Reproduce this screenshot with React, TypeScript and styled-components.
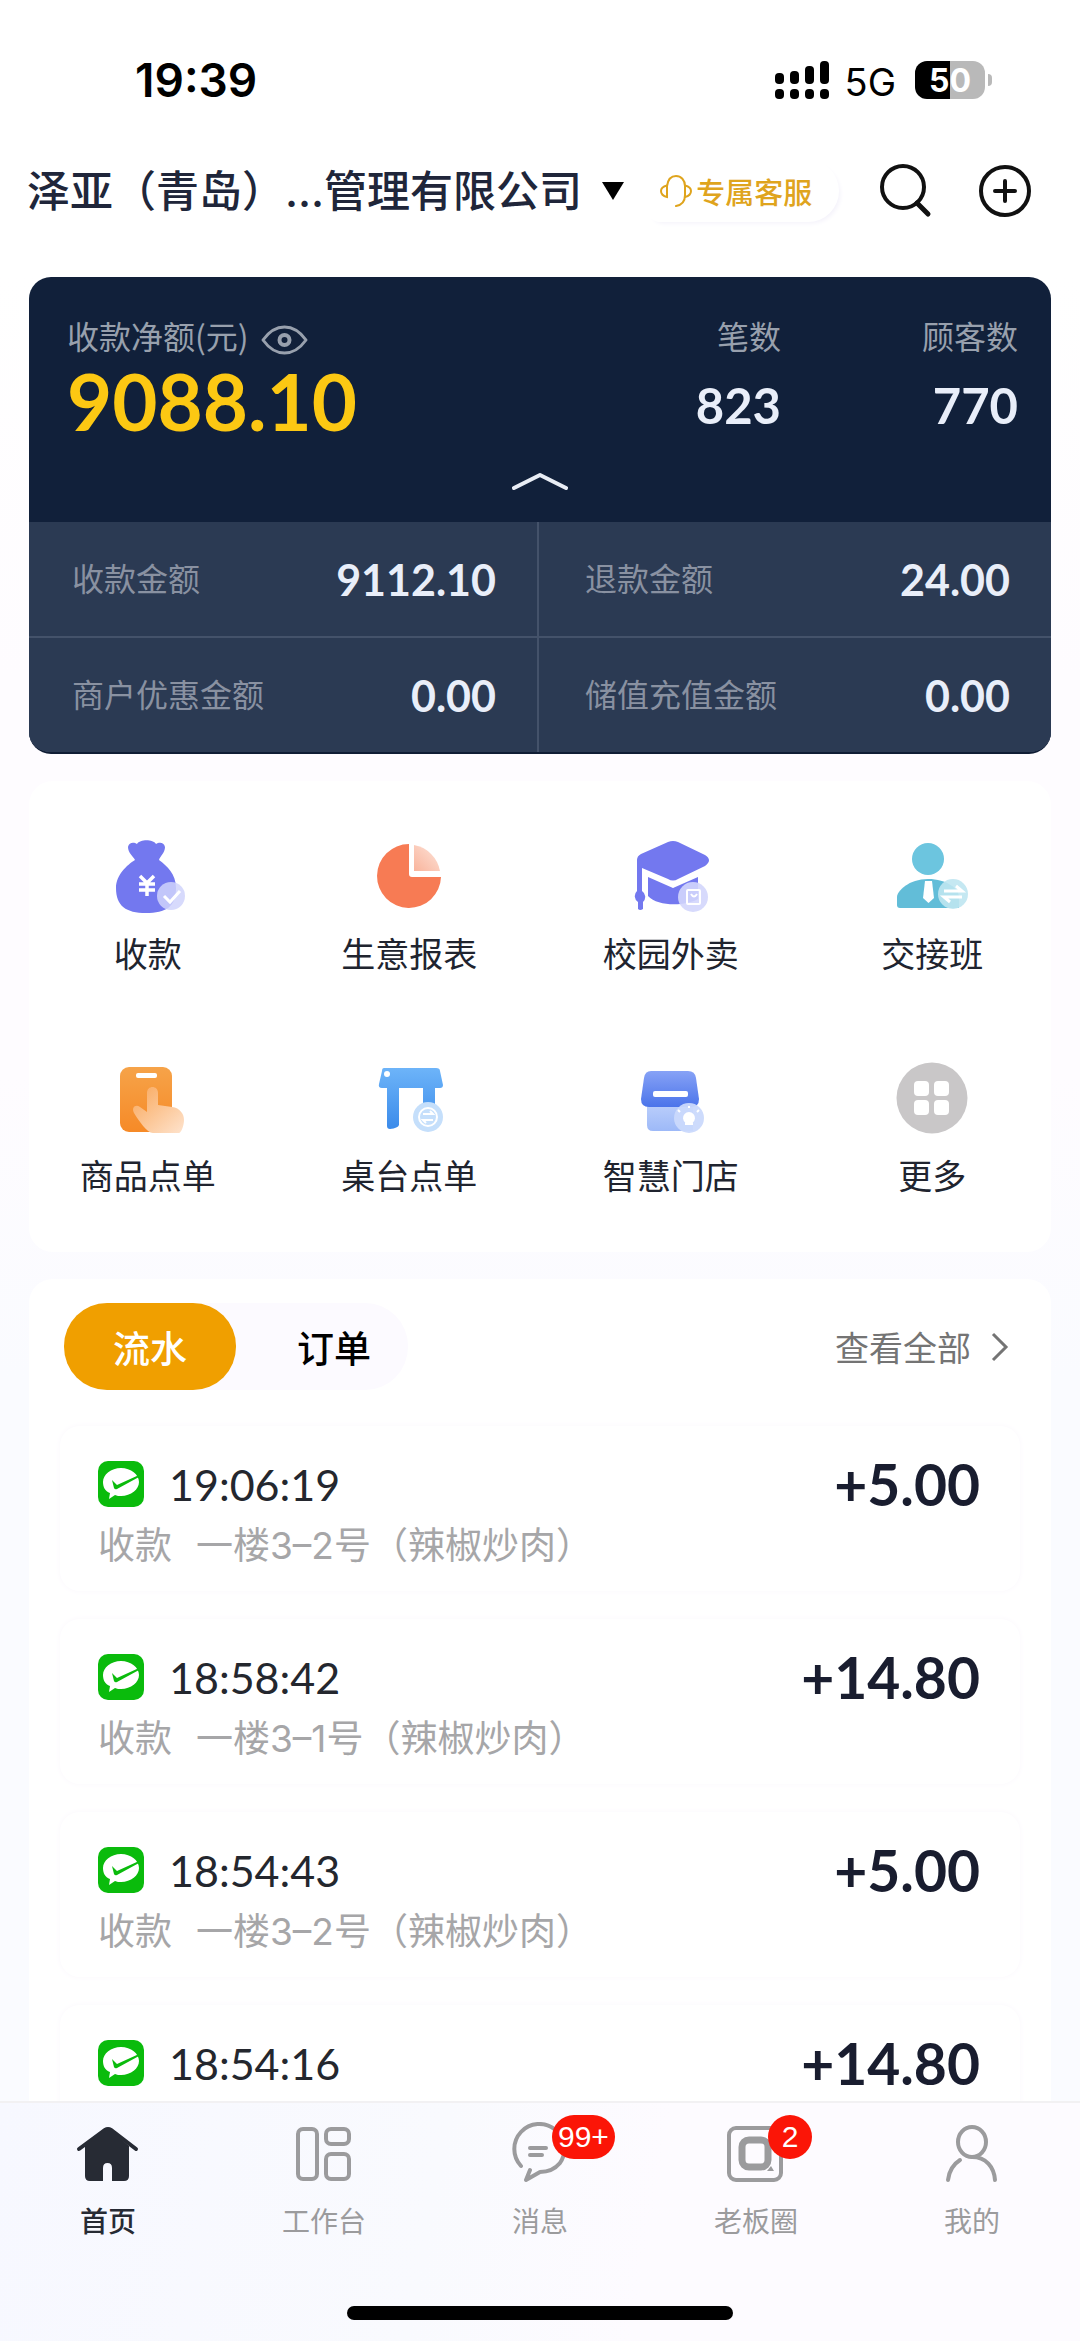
import React from "react";
import styled, { createGlobalStyle } from "styled-components";

const cjk = '"Noto Sans CJK SC", sans-serif';

const GlobalStyle = createGlobalStyle`
  *, *::before, *::after { box-sizing: border-box; }
  body { margin: 0; background: #fdfcff; color: #20242f; font-family: ${cjk}; }
  button, a { font: inherit; color: inherit; text-decoration: none; }
  button { padding: 0; border: 0; background: none; cursor: pointer; }
  h1, p, dl, dt, dd, ul { margin: 0; padding: 0; }
  ul { list-style: none; }
  svg { display: block; flex: none; }
`;

/* ---------- shell ---------- */

const Screen = styled.div`
  display: flex;
  flex-direction: column;
  height: 100vh;
  overflow: hidden;
`;

const Top = styled.div`
  flex: none;
  background: #fff;
`;

const Scroller = styled.main`
  flex: 1;
  min-height: 0;
  padding: 0 29px;
  overflow-y: auto;
  scrollbar-width: none;
  background: linear-gradient(#fff, #fefcff 400px, #fefcff 800px, #fafbff 1100px, #fafbff);
`;

/* ---------- status bar ---------- */

const StatusBar = styled.div`
  display: flex;
  align-items: center;
  justify-content: space-between;
  height: 160px;
  padding: 0 88px 0 135px;
  color: #000;
  font-family: Inter, sans-serif;
`;

const Clock = styled.span`
  font-size: 46px;
  font-weight: 600;
`;

const Signals = styled.div`
  display: flex;
  align-items: center;
`;

const Network = styled.span`
  margin: 4px 19px 0 15px;
  font-size: 38px;
  line-height: 40px;
`;

const Battery = styled.span`
  display: flex;
  align-items: center;
  justify-content: center;
  width: 70px;
  height: 38px;
  border-radius: 12px;
  background: linear-gradient(90deg, #000 50%, #b9b9b9 50%);
  color: #fff;
  font-size: 32px;
  font-weight: 700;
`;

const BatteryTip = styled.span`
  width: 4px;
  height: 12px;
  margin-left: 3px;
  border-radius: 0 6px 6px 0;
  background: #b9b9b9;
`;

/* ---------- header ---------- */

const Header = styled.header`
  display: flex;
  align-items: center;
  height: 62px;
  margin-bottom: 55px;
  padding: 0 48px 0 27px;
`;

const Merchant = styled.button`
  display: flex;
  align-items: center;
  gap: 20px;
  white-space: nowrap;
`;

const MerchantName = styled.h1`
  color: #20263a;
  font-family: Inter, ${cjk};
  font-size: 43px;
  font-weight: 500;
  line-height: 62px;
`;

const Service = styled.button`
  display: flex;
  align-items: center;
  gap: 4px;
  height: 62px;
  margin-left: 24px;
  padding: 0 27px 0 12px;
  border-radius: 12px 32px 32px 12px;
  box-shadow: 3px 3px 5px -2px #f3f1fa;
  color: #dfa41d;
  font-size: 29px;
  font-weight: 500;
  white-space: nowrap;
`;

const Tools = styled.div`
  display: flex;
  gap: 46px;
  margin-left: auto;
`;

/* ---------- summary ---------- */

const Summary = styled.section`
  overflow: hidden;
  border-bottom: 2px solid #101d35;
  border-radius: 22px;
  background: #11203a;
  color: #e9eef9;
`;

const Headline = styled.div`
  display: flex;
  justify-content: space-between;
  padding: 34px 33px 0 38px;
`;

const Counters = styled.div`
  display: flex;
  gap: 141px;
`;

const Figure = styled.dl<{ $end?: boolean }>`
  text-align: ${(p) => (p.$end ? "right" : "left")};
`;

const FigureLabel = styled.dt`
  display: flex;
  align-items: center;
  gap: 12px;
  height: 48px;
  color: #98a0ad;
  font-size: 32px;
  line-height: 48px;
`;

const CounterLabel = styled(FigureLabel)`
  justify-content: flex-end;
`;

const NetAmount = styled.dd`
  color: #fcc813;
  font-family: Lato, sans-serif;
  font-size: 78px;
  font-weight: 700;
  line-height: 84px;
`;

const Count = styled.dd`
  font-family: Lato, sans-serif;
  font-size: 49px;
  font-weight: 700;
  line-height: 92px;
`;

const Collapse = styled.button`
  display: flex;
  align-items: center;
  justify-content: center;
  width: 100%;
  height: 71px;
  padding-bottom: 12px;
`;

const Breakdown = styled.div`
  display: grid;
  grid-template-columns: 508fr 512fr;
  gap: 2px;
  background: #44526a;
`;

const Entry = styled.dl`
  display: flex;
  align-items: center;
  justify-content: space-between;
  height: 114px;
  padding: 0 41px 0 43px;
  background: #2b3a53;

  &:nth-child(even) { padding-left: 46px; }
`;

const EntryLabel = styled.dt`
  padding-bottom: 4px;
  color: #8991a1;
  font-size: 32px;
`;

const EntryValue = styled.dd`
  font-family: Lato, sans-serif;
  font-size: 43px;
  font-weight: 700;
`;

/* ---------- shortcuts ---------- */

const Panel = styled.section`
  margin-top: 27px;
  border-radius: 24px;
  background: #fff;
`;

const Shortcuts = styled.ul`
  display: grid;
  grid-template-columns: repeat(4, 1fr);
  row-gap: 83px;
  margin: 0 -12px;
  padding: 55px 0;
`;

const Shortcut = styled.button`
  display: flex;
  flex-direction: column;
  align-items: center;
  gap: 15px;
  width: 100%;
  color: #20242f;
  font-size: 34px;
  line-height: 44px;
`;

/* ---------- records ---------- */

const RecordsPanel = styled(Panel)`
  padding: 24px 31px 0;
`;

const RecordsHead = styled.div`
  display: flex;
  align-items: center;
  justify-content: space-between;
  margin-bottom: 36px;
  padding: 0 11px 0 4px;
`;

const Tabs = styled.div`
  display: flex;
  border-radius: 43px;
  background: #fcfaff;
`;

const Tab = styled.button<{ $active?: boolean }>`
  width: 172px;
  height: 87px;
  border-radius: 43px;
  background: ${(p) => (p.$active ? "#f09f00" : "transparent")};
  color: ${(p) => (p.$active ? "#fff" : "#000")};
  font-size: 37px;
  font-weight: 500;

  & + & { padding-left: 24px; }
`;

const ViewAll = styled.a`
  display: flex;
  align-items: center;
  gap: 20px;
  color: #747474;
  font-size: 34px;
`;

const Records = styled.ul`
  display: grid;
  gap: 28px;
`;

const Record = styled.li`
  min-height: 165px;
  padding: 32px 40px 23px 38px;
  border-radius: 20px;
  box-shadow: 0 0 6px #faf7fc;
`;

const RecordRow = styled.div`
  display: flex;
  align-items: center;
  gap: 25px;
  height: 52px;
  margin-bottom: 14px;
  font-family: Lato, sans-serif;
`;

const Time = styled.time`
  color: #24272e;
  font-size: 43px;
`;

const Amount = styled.span`
  margin-left: auto;
  color: #191d2f;
  font-size: 57px;
  font-weight: 700;
`;

const Note = styled.p`
  display: flex;
  gap: 24px;
  color: #a6a6a8;
  font-family: Inter, ${cjk};
  font-size: 37px;
  line-height: 44px;
  white-space: nowrap;
`;

/* ---------- bottom navigation ---------- */

const Footer = styled.footer`
  flex: none;
  border-top: 2px solid #f2f1f3;
  background: linear-gradient(100deg, #f7f8ff, #f9fafe 40%, #fdfbff 60%);
`;

const Nav = styled.nav`
  display: grid;
  grid-template-columns: repeat(5, 1fr);
  padding-top: 19px;
`;

const NavItem = styled.a<{ $active?: boolean }>`
  display: flex;
  flex-direction: column;
  align-items: center;
  gap: 14px;
  color: ${(p) => (p.$active ? "#272b34" : "#9b9b9d")};
  font-size: 28px;
  font-weight: ${(p) => (p.$active ? 500 : 400)};
  line-height: 40px;
`;

const NavIcon = styled.span`
  position: relative;
`;

const Badge = styled.span`
  position: absolute;
  top: -7px;
  left: 44px;
  min-width: 44px;
  height: 44px;
  padding: 0 6px;
  border-radius: 22px;
  background: #fb1507;
  color: #fff;
  font-family: "Liberation Sans", sans-serif;
  font-size: 30px;
  font-weight: 400;
  line-height: 44px;
  text-align: center;
`;

const HomeIndicator = styled.div`
  width: 386px;
  height: 14px;
  margin: 66px auto 21px;
  border-radius: 7px;
  background: #000;
`;

/* ---------- drawings ---------- */

const SignalIcon = () => (
  <svg width="55" height="38" viewBox="0 0 55 38" aria-hidden="true">
    {[12, 10, 5, 0].map((y, i) => (
      <g key={y}>
        <rect x={i * 15} y={y} width="9" height={23 - y} rx="4" />
        <rect x={i * 15} y="28" width="9" height="10" rx="4" />
      </g>
    ))}
  </svg>
);

const HeadsetIcon = () => (
  <svg width="32" height="34" viewBox="0 0 32 34" fill="none" stroke="currentColor" strokeWidth="2" strokeLinecap="round" aria-hidden="true">
    <path d="M7 12C8 5 11 2 16 2s9 4 9 10v9c0 6-3 10-9 11" />
    <path d="M7 11.500c-4 1-6 3-6 5.500s2 5 6 6zM25 11.500c4 1 6 3 6 5.500s-2 5-6 6z" />
  </svg>
);

const SearchIcon = () => (
  <svg width="54" height="54" viewBox="0 0 54 54" fill="none" stroke="#111" strokeWidth="4" strokeLinecap="round" aria-hidden="true">
    <circle cx="25" cy="23" r="21" />
    <path d="M39 39l11 11" strokeWidth="5" />
  </svg>
);

const AddIcon = () => (
  <svg width="54" height="54" viewBox="0 0 54 54" fill="none" stroke="#111" strokeWidth="4" strokeLinecap="round" aria-hidden="true">
    <circle cx="27" cy="27" r="24" />
    <path d="M27 17v20M17 27h20" />
  </svg>
);

const EyeIcon = () => (
  <svg width="47" height="42" viewBox="0 -10 47 42" fill="none" stroke="currentColor" strokeWidth="3" aria-hidden="true">
    <path d="M2 16C7 9 15 3 23.500 3S40 9 45 16C40 23 32 29 23.500 29S7 23 2 16z" strokeLinejoin="round" />
    <circle cx="23.500" cy="16" r="5" strokeWidth="4" />
  </svg>
);

const BagIcon = () => (
  <svg width="80" height="80" viewBox="0 0 80 80" aria-hidden="true">
    <path d="M27 24c-2-4-7-7-7-13 1-5 6-5 9-3 3-5 16-5 19 0 3-2 8-2 9 3 0 6-5 9-6 13 8 6 17 14 17 28 0 19-10 25-30 25S8 70 8 52c0-13 11-23 19-28z" fill="#7378ef" />
    <path d="M32 40l7 7 7-7M39 47v13M31 48h16M31 54h16" stroke="#fff" strokeWidth="3.500" fill="none" />
    <circle cx="63" cy="60" r="14" fill="#d0d3fb" fillOpacity=".85" />
    <path d="M56 60l6 6 10-11" stroke="#fff" strokeWidth="3" fill="none" />
  </svg>
);

const PieIcon = () => (
  <svg width="80" height="80" viewBox="0 0 80 80" aria-hidden="true">
    <defs>
      <linearGradient id="pie-slice" x1="1" y1="0" x2="0" y2="1">
        <stop offset="0" stopColor="#fde4da" />
        <stop offset="1" stopColor="#f9b49c" />
      </linearGradient>
    </defs>
    <path d="M40 8a32 32 0 1 0 32 33H43q-3 0-3-3z" fill="#f77b54" />
    <path d="M45 9a32 32 0 0 1 26 26H45z" fill="url(#pie-slice)" />
  </svg>
);

const CapIcon = () => (
  <svg width="80" height="80" viewBox="0 0 80 80" aria-hidden="true">
    <path d="M17 41l25 11 25-11v22c-12 7-40 8-50-3z" fill="#7378ef" />
    <path d="M11 28l31 20 31-20" fill="none" stroke="#fff" strokeWidth="6" />
    <path d="M37 6q5-2 10 0l27 13q8 5 0 11L47 43q-5 3-10 0L11 32v23a7 7 0 0 1 1 11v7q-3 2-5 0v-7a7 7 0 0 1-1-11V24q0-4 4-6z" fill="#7378ef" />
    <circle cx="62" cy="61" r="15" fill="#d3d6fc" fillOpacity=".9" />
    <rect x="56" y="54" width="13" height="14" rx="1" fill="none" stroke="#fff" strokeWidth="2" />
    <path d="M60 58q3 5 6 0" fill="none" stroke="#fff" strokeWidth="2" />
  </svg>
);

const ShiftIcon = () => (
  <svg width="80" height="80" viewBox="0 0 80 80" aria-hidden="true">
    <circle cx="36" cy="23" r="16" fill="#6cc5df" />
    <path d="M5 69V61c0-6 12-18 31-18s31 10 31 18v11H8q-3 0-3-3z" fill="#62bdd8" />
    <path d="M33 45h7l2 17-5.500 5-5.500-5z" fill="#fff" />
    <circle cx="61" cy="58" r="15" fill="#bfe6f1" fillOpacity=".9" />
    <path d="M52 55h18l-6-5M70 61H52l6 5" fill="none" stroke="#fff" strokeWidth="3" />
  </svg>
);

const OrderIcon = () => (
  <svg width="80" height="80" viewBox="0 0 80 80" aria-hidden="true">
    <defs>
      <linearGradient id="order-body" x1="0" y1="0" x2="0" y2="1">
        <stop offset="0" stopColor="#f6a349" />
        <stop offset="1" stopColor="#f68a27" />
      </linearGradient>
      <linearGradient id="order-hand" x1="0" y1="0" x2="1" y2="1">
        <stop offset="0" stopColor="#f9a75a" />
        <stop offset="1" stopColor="#fee3cd" />
      </linearGradient>
    </defs>
    <rect x="12" y="9" width="52" height="65" rx="9" fill="url(#order-body)" />
    <rect x="28" y="15" width="21" height="5" rx="2" fill="#fff" />
    <path d="M39 35c0-8 11-8 11 0v12l14 2c8 1 12 7 12 13s-3 13-5 13H45c-6 0-14-12-19-20-3-6 2-9 6-6l7 5z" fill="url(#order-hand)" />
  </svg>
);

const TableIcon = () => (
  <svg width="80" height="80" viewBox="0 0 80 80" aria-hidden="true">
    <defs>
      <linearGradient id="table-body" x1="0" y1="0" x2="0" y2="1">
        <stop offset="0" stopColor="#6db4f9" />
        <stop offset="1" stopColor="#3b8bea" />
      </linearGradient>
    </defs>
    <path d="M15 10h52q4 0 4 3l3 14q0 3-3 3h-5v36H54V30H30v37q-1 3-9 4-3 0-3-3V30h-5q-4 0-3-4l3-13q0-3 2-3z" fill="url(#table-body)" />
    <circle cx="18" cy="16" r="3" fill="#fff" />
    <circle cx="59" cy="59" r="15" fill="#c5dffb" />
    <circle cx="59" cy="59" r="9" fill="none" stroke="#fff" strokeWidth="2" />
    <path d="M54 56h10l-3-3M64 62H54l3 3" fill="none" stroke="#fff" strokeWidth="2" />
  </svg>
);

const StoreIcon = () => (
  <svg width="80" height="80" viewBox="0 0 80 80" aria-hidden="true">
    <defs>
      <linearGradient id="store-roof" x1="0" y1="0" x2="0" y2="1">
        <stop offset="0" stopColor="#87a2f6" />
        <stop offset="1" stopColor="#4b74ea" />
      </linearGradient>
      <linearGradient id="store-wall" x1="0" y1="0" x2="0" y2="1">
        <stop offset="0" stopColor="#bccffb" />
        <stop offset="1" stopColor="#9db9f8" />
      </linearGradient>
    </defs>
    <path d="M16 45h46v28H22q-6 0-6-6z" fill="url(#store-wall)" />
    <path d="M20 13h37q7 0 8 7l3 21q0 8-8 8H18q-8 0-8-8l3-21q1-7 7-7z" fill="url(#store-roof)" />
    <rect x="22" y="33" width="35" height="6" rx="2" fill="#fff" />
    <circle cx="58" cy="60" r="15" fill="#cad9fc" fillOpacity=".95" />
    <path d="M55 66v-2a5 5 0 1 1 6 0v2zM49 54l-2-2M58 50v-2M66 54l2-2" fill="#fff" stroke="#fff" strokeWidth="2" />
  </svg>
);

const MoreIcon = () => (
  <svg width="80" height="80" viewBox="0 0 80 80" aria-hidden="true">
    <circle cx="40" cy="40" r="35.500" fill="#c9c7c8" />
    {[22, 42].map((x) =>
      [23, 42].map((y) => <rect key={`${x}-${y}`} x={x} y={y} width="15" height="15" rx="4" fill="#fff" />)
    )}
  </svg>
);

const WeChatPayIcon = () => (
  <svg width="46" height="46" viewBox="0 0 46 46" aria-hidden="true">
    <rect width="46" height="46" rx="10" fill="#0abb0c" />
    <path d="M23 7c10 0 18 6.500 18 14s-8 14-18 14c-2 0-4 0-6-1l-6 4 1-6C7 30 5 26 5 21 5 13.500 13 7 23 7z" fill="#fff" />
    <path d="M14 19l5 5 22-10v2L19 28q-2 1-3-1z" fill="#0abb0c" />
  </svg>
);

const HomeIcon = () => (
  <svg width="64" height="64" viewBox="0 0 64 64" aria-hidden="true">
    <path d="M3 27L29 8q3-2 6 0L60 27" fill="none" stroke="currentColor" strokeWidth="4" strokeLinecap="round" />
    <path d="M9 24L29 8q3-2 6 0l18 16v30q0 5-5 5H36V46q0-5-4.500-5T27 46v13H14q-5 0-5-5z" fill="currentColor" />
  </svg>
);

const WorkbenchIcon = () => (
  <svg width="64" height="64" viewBox="0 0 64 64" fill="none" stroke="currentColor" strokeWidth="4" aria-hidden="true">
    <rect x="6" y="7" width="19" height="50" rx="5" />
    <rect x="34" y="7" width="23" height="15" rx="5" />
    <rect x="34" y="32" width="23" height="25" rx="5" />
  </svg>
);

const MessageIcon = () => (
  <svg width="64" height="64" viewBox="0 0 64 64" fill="none" stroke="currentColor" strokeWidth="4" strokeLinecap="round" strokeLinejoin="round" aria-hidden="true">
    <path d="M13 44A25 25 0 1 1 52 41C47 47 41 50 32 50L18 58 22 48M22 26h16M22 33h12" />
  </svg>
);

const CircleIcon = () => (
  <svg width="64" height="64" viewBox="0 0 64 64" fill="none" stroke="currentColor" strokeWidth="4" aria-hidden="true">
    <rect x="5" y="6" width="52" height="52" rx="7" />
    <rect x="18" y="18" width="26" height="27" rx="7" strokeWidth="7" />
    <path d="M43 49l4-5 3 5z" fill="currentColor" stroke="none" />
  </svg>
);

const ProfileIcon = () => (
  <svg width="64" height="64" viewBox="0 0 64 64" fill="none" stroke="currentColor" strokeWidth="4" strokeLinecap="round" aria-hidden="true">
    <ellipse cx="32" cy="20" rx="14" ry="15" />
    <path d="M20 38C12 43 9 50 8 58M32 35c14 0 22 10 23 23" />
  </svg>
);

/* ---------- data ---------- */

const breakdown = [
  ["收款金额", "9112.10"],
  ["退款金额", "24.00"],
  ["商户优惠金额", "0.00"],
  ["储值充值金额", "0.00"],
];

const shortcuts = [
  { label: "收款", Icon: BagIcon },
  { label: "生意报表", Icon: PieIcon },
  { label: "校园外卖", Icon: CapIcon },
  { label: "交接班", Icon: ShiftIcon },
  { label: "商品点单", Icon: OrderIcon },
  { label: "桌台点单", Icon: TableIcon },
  { label: "智慧门店", Icon: StoreIcon },
  { label: "更多", Icon: MoreIcon },
];

const records = [
  { time: "19:06:19", amount: "+5.00", note: "一楼3–2号（辣椒炒肉）" },
  { time: "18:58:42", amount: "+14.80", note: "一楼3–1号（辣椒炒肉）" },
  { time: "18:54:43", amount: "+5.00", note: "一楼3–2号（辣椒炒肉）" },
  { time: "18:54:16", amount: "+14.80" },
];

const navItems = [
  { label: "首页", Icon: HomeIcon, active: true },
  { label: "工作台", Icon: WorkbenchIcon },
  { label: "消息", Icon: MessageIcon, badge: "99+" },
  { label: "老板圈", Icon: CircleIcon, badge: "2" },
  { label: "我的", Icon: ProfileIcon },
];

export default function App() {
  return (
    <Screen>
      <GlobalStyle />
      <Top>
        <StatusBar>
          <Clock>19:39</Clock>
          <Signals>
            <SignalIcon />
            <Network>5G</Network>
            <Battery>50</Battery>
            <BatteryTip />
          </Signals>
        </StatusBar>
        <Header>
          <Merchant>
            <MerchantName>泽亚（青岛）...管理有限公司</MerchantName>
            <svg width="22" height="18" viewBox="0 0 22 18" aria-hidden="true">
              <path d="M0 0h22L11 18z" />
            </svg>
          </Merchant>
          <Service>
            <HeadsetIcon />
            专属客服
          </Service>
          <Tools>
            <button aria-label="搜索"><SearchIcon /></button>
            <button aria-label="添加"><AddIcon /></button>
          </Tools>
        </Header>
      </Top>

      <Scroller>
        <Summary>
          <Headline>
            <Figure>
              <FigureLabel>
                收款净额(元)
                <EyeIcon />
              </FigureLabel>
              <NetAmount>9088.10</NetAmount>
            </Figure>
            <Counters>
              <Figure $end>
                <CounterLabel>笔数</CounterLabel>
                <Count>823</Count>
              </Figure>
              <Figure $end>
                <CounterLabel>顾客数</CounterLabel>
                <Count>770</Count>
              </Figure>
            </Counters>
          </Headline>
          <Collapse aria-label="收起">
            <svg width="56" height="20" viewBox="0 0 56 20" fill="none" stroke="#e9edf5" strokeWidth="4" aria-hidden="true">
              <path d="M2 17L28 4l26 13" strokeLinecap="round" strokeLinejoin="round" />
            </svg>
          </Collapse>
          <Breakdown>
            {breakdown.map(([label, value]) => (
              <Entry key={label}>
                <EntryLabel>{label}</EntryLabel>
                <EntryValue>{value}</EntryValue>
              </Entry>
            ))}
          </Breakdown>
        </Summary>

        <Panel>
          <Shortcuts>
            {shortcuts.map(({ label, Icon }) => (
              <li key={label}>
                <Shortcut>
                  <Icon />
                  {label}
                </Shortcut>
              </li>
            ))}
          </Shortcuts>
        </Panel>

        <RecordsPanel>
          <RecordsHead>
            <Tabs role="tablist">
              <Tab role="tab" aria-selected="true" $active>流水</Tab>
              <Tab role="tab" aria-selected="false">订单</Tab>
            </Tabs>
            <ViewAll href="#records">
              查看全部
              <svg width="18" height="30" viewBox="0 0 18 30" fill="none" stroke="currentColor" strokeWidth="3" aria-hidden="true">
                <path d="M2 2l13 13L2 28" />
              </svg>
            </ViewAll>
          </RecordsHead>
          <Records id="records">
            {records.map(({ time, amount, note }) => (
              <Record key={time}>
                <RecordRow>
                  <WeChatPayIcon />
                  <Time>{time}</Time>
                  <Amount>{amount}</Amount>
                </RecordRow>
                {note && (
                  <Note>
                    <span>收款</span>
                    <span>{note}</span>
                  </Note>
                )}
              </Record>
            ))}
          </Records>
        </RecordsPanel>
      </Scroller>

      <Footer>
        <Nav>
          {navItems.map(({ label, Icon, active, badge }) => (
            <NavItem key={label} href="#" $active={active}>
              <NavIcon>
                <Icon />
                {badge && <Badge>{badge}</Badge>}
              </NavIcon>
              {label}
            </NavItem>
          ))}
        </Nav>
        <HomeIndicator />
      </Footer>
    </Screen>
  );
}
